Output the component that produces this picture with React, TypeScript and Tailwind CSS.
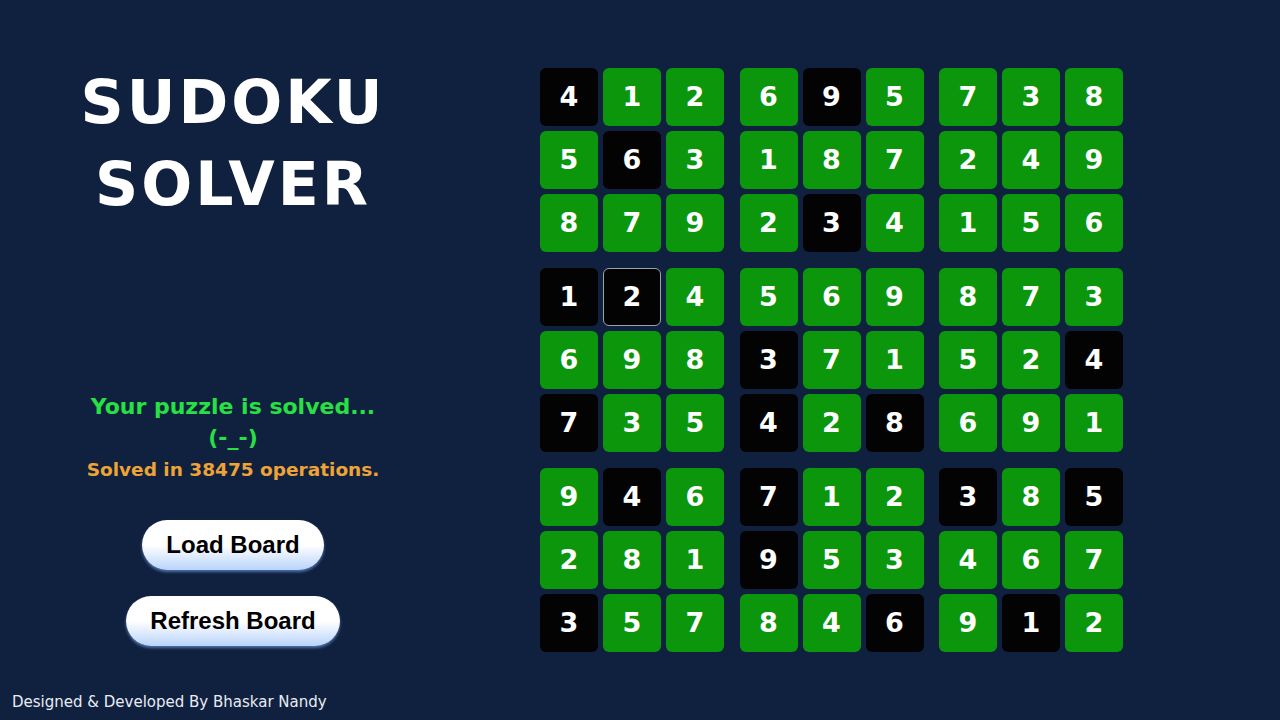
const board = [
  [4, 1, 2, 6, 9, 5, 7, 3, 8],
  [5, 6, 3, 1, 8, 7, 2, 4, 9],
  [8, 7, 9, 2, 3, 4, 1, 5, 6],
  [1, 2, 4, 5, 6, 9, 8, 7, 3],
  [6, 9, 8, 3, 7, 1, 5, 2, 4],
  [7, 3, 5, 4, 2, 8, 6, 9, 1],
  [9, 4, 6, 7, 1, 2, 3, 8, 5],
  [2, 8, 1, 9, 5, 3, 4, 6, 7],
  [3, 5, 7, 8, 4, 6, 9, 1, 2],
];

// cells that were given in the original puzzle
const given = [
  [1, 0, 0, 0, 1, 0, 0, 0, 0],
  [0, 1, 0, 0, 0, 0, 0, 0, 0],
  [0, 0, 0, 0, 1, 0, 0, 0, 0],
  [1, 1, 0, 0, 0, 0, 0, 0, 0],
  [0, 0, 0, 1, 0, 0, 0, 0, 1],
  [1, 0, 0, 1, 0, 1, 0, 0, 0],
  [0, 1, 0, 1, 0, 0, 1, 0, 1],
  [0, 0, 0, 1, 0, 0, 0, 0, 0],
  [1, 0, 0, 0, 0, 1, 0, 1, 0],
];

const font = { fontFamily: '"DejaVu Sans", "Noto Sans", sans-serif' };
const btnFont = { fontFamily: '"Liberation Sans", Arial, sans-serif' };

function Cell({ r, c }: { r: number; c: number }) {
  const isGiven = given[r][c] === 1;
  const selected = r === 3 && c === 1;
  return (
    <div
      className={
        "flex h-[58px] w-[58px] items-center justify-center rounded-[6px] text-[27px] font-semibold text-white " +
        (isGiven ? "bg-[#030303]" : "bg-[#0b960b]") +
        (selected ? " border border-[#9aa3b0]" : "")
      }
    >
      {board[r][c]}
    </div>
  );
}

function Box({ br, bc }: { br: number; bc: number }) {
  const cells = [];
  for (let i = 0; i < 3; i++)
    for (let j = 0; j < 3; j++) cells.push(<Cell key={`${i}-${j}`} r={br * 3 + i} c={bc * 3 + j} />);
  return <div className="grid grid-cols-3 gap-x-[5px] gap-y-[5px]">{cells}</div>;
}

export default function App() {
  const boxes = [];
  for (let i = 0; i < 3; i++) for (let j = 0; j < 3; j++) boxes.push(<Box key={`${i}${j}`} br={i} bc={j} />);

  return (
    <div className="relative flex h-[720px] w-[1280px] bg-[#10203f]" style={font}>
      <div className="flex w-[466px] flex-col items-center pt-[61px]">
        <h1 className="text-center text-[60px] font-bold leading-[82px] tracking-[3px] text-white">
          SUDOKU
          <br />
          SOLVER
        </h1>
        <div className="mt-[166px] text-center text-[22px] font-bold leading-[31px] text-[#27e043]">
          <div>Your puzzle is solved...</div>
          <div>(-_-)</div>
        </div>
        <div className="mt-[3px] text-[18.5px] font-bold text-[#eea337]">Solved in 38475 operations.</div>
        <button
          className="mt-[36px] h-[50px] rounded-full bg-gradient-to-b from-white via-white to-[#b9d3fa] px-[24px] text-[24px] font-bold text-black shadow-[0_2px_3px_rgba(120,170,240,0.6)]"
          style={btnFont}
        >
          Load Board
        </button>
        <button
          className="mt-[26px] h-[50px] rounded-full bg-gradient-to-b from-white via-white to-[#b9d3fa] px-[24px] text-[24px] font-bold text-black shadow-[0_2px_3px_rgba(120,170,240,0.6)]"
          style={btnFont}
        >
          Refresh Board
        </button>
      </div>
      <div className="ml-[74px] pt-[68px]">
        <div className="grid grid-cols-3 gap-x-[15.5px] gap-y-[16px]">{boxes}</div>
      </div>
      <div className="absolute bottom-[7px] left-[12px] text-[15px] text-[#e8ecf2]">
        Designed &amp; Developed By Bhaskar Nandy
      </div>
    </div>
  );
}
